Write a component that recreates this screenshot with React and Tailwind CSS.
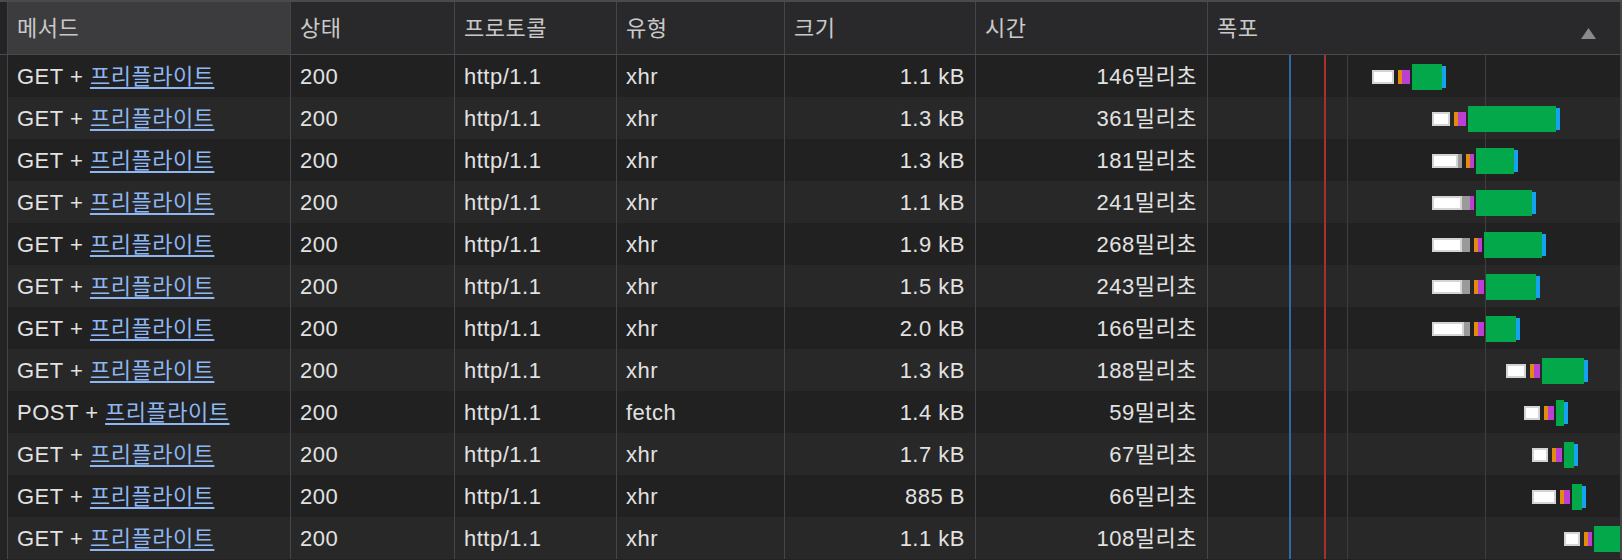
import React from "react";

const rows = [
  ["GET", "1.1 kB", "146", "xhr"],
  ["GET", "1.3 kB", "361", "xhr"],
  ["GET", "1.3 kB", "181", "xhr"],
  ["GET", "1.1 kB", "241", "xhr"],
  ["GET", "1.9 kB", "268", "xhr"],
  ["GET", "1.5 kB", "243", "xhr"],
  ["GET", "2.0 kB", "166", "xhr"],
  ["GET", "1.3 kB", "188", "xhr"],
  ["POST", "1.4 kB", "59", "fetch"],
  ["GET", "1.7 kB", "67", "xhr"],
  ["GET", "885 B", "66", "xhr"],
  ["GET", "1.1 kB", "108", "xhr"],
];

// [white start, white width, gray width, orange start, orange width, magenta width, green start, green width, blue width]
const bars = [
  [164, 22, 0, 190, 4, 8, 204, 30, 4],
  [224, 18, 0, 246, 4, 8, 260, 88, 4],
  [224, 26, 4, 258, 4, 4, 268, 38, 4],
  [224, 30, 8, 262, 0, 4, 268, 56, 4],
  [224, 30, 8, 266, 4, 4, 276, 58, 4],
  [224, 30, 8, 266, 4, 6, 278, 50, 4],
  [224, 32, 6, 266, 4, 6, 278, 30, 4],
  [298, 20, 0, 322, 4, 6, 334, 42, 4],
  [316, 16, 0, 336, 4, 6, 348, 8, 4],
  [324, 16, 0, 344, 4, 6, 356, 10, 4],
  [324, 24, 0, 352, 4, 6, 364, 10, 4],
  [356, 16, 0, 376, 4, 4, 386, 30, 0],
];

const font = { fontFamily: '"Liberation Sans", "Noto Sans CJK KR", Arial, sans-serif' };

function Waterfall({ b }) {
  const [ws, ww, gw, os, ow, mw, gs, gwid, bw] = b;
  return (
    <div className="relative h-full overflow-hidden">
      <div className="absolute top-0 bottom-0 left-[81px] w-[2px] bg-[#2f6aa8]" />
      <div className="absolute top-0 bottom-0 left-[116px] w-[2px] bg-[#a8302b]" />
      <div className="absolute top-0 bottom-0 left-[139px] w-px bg-[#3e3e3e]" />
      <div className="absolute top-0 bottom-0 left-[277px] w-px bg-[#3e3e3e]" />
      <div
        className="absolute top-[15px] h-[14px] bg-white border-2 border-[#d4d4d4]"
        style={{ left: ws, width: ww }}
      />
      {gw > 0 && (
        <div className="absolute top-[15px] h-[14px] bg-[#9a9a9a]" style={{ left: ws + ww, width: gw }} />
      )}
      {ow > 0 && (
        <div className="absolute top-[15px] h-[14px] bg-[#e38b0c]" style={{ left: os, width: ow }} />
      )}
      <div className="absolute top-[15px] h-[14px] bg-[#bb3fd3]" style={{ left: os + ow, width: mw }} />
      <div className="absolute top-[9px] h-[26px] bg-[#02a84a]" style={{ left: gs, width: gwid }} />
      {bw > 0 && (
        <div className="absolute top-[11px] h-[22px] bg-[#14a3f0]" style={{ left: gs + gwid, width: bw }} />
      )}
    </div>
  );
}

export default function App() {
  const cols = "grid grid-cols-[8px_283px_164px_162px_168px_191px_232px_414px]";
  const headCell = "h-[52px] flex items-center px-[9px] border-r border-[#454547] text-[#c9c9c9]";
  const cell = "h-[42px] flex items-center px-[9px] border-r border-[#454547] text-[#e2e2e2]";

  return (
    <div
      className="w-[1622px] h-[560px] overflow-hidden bg-[#232323] text-[22px] tracking-[0.5px]"
      style={font}
    >
      <div className={`${cols} border-t-2 border-b border-[#4a4a4c] bg-[#29292b]`}>
        <div className="h-[52px] border-r border-[#454547] bg-[#232325]" />
        <div className={`${headCell} bg-[#3c3c3e]`}>메서드</div>
        <div className={headCell}>상태</div>
        <div className={headCell}>프로토콜</div>
        <div className={headCell}>유형</div>
        <div className={headCell}>크기</div>
        <div className={headCell}>시간</div>
        <div className={`${headCell} justify-between pr-[24px] border-r-2`}>
          <span>폭포</span>
          <svg width="15" height="11" viewBox="0 0 15 11" className="mt-[10px]">
            <path d="M7.5 0 L15 11 L0 11 Z" fill="#8a8a8a" />
          </svg>
        </div>
      </div>
      {rows.map((r, i) => (
        <div
          key={i}
          className={`${cols} ${i % 2 === 0 ? "bg-[#212121]" : "bg-[#282828]"}`}
        >
          <div className="h-[42px] border-r border-[#454547] bg-[#232323]" />
          <div className={cell}>
            <span>
              {r[0]} +{" "}
              <span className="text-[#8db6f2] underline underline-offset-[3px] decoration-[1.5px]">
                프리플라이트
              </span>
            </span>
          </div>
          <div className={cell}>200</div>
          <div className={cell}>http/1.1</div>
          <div className={cell}>{r[3]}</div>
          <div className={`${cell} justify-end pr-[10px]`}>{r[1]}</div>
          <div className={`${cell} justify-end pr-[10px]`}>{r[2]}밀리초</div>
          <div className="h-[42px] border-r-2 border-[#454547]">
            <Waterfall b={bars[i]} />
          </div>
        </div>
      ))}
    </div>
  );
}
